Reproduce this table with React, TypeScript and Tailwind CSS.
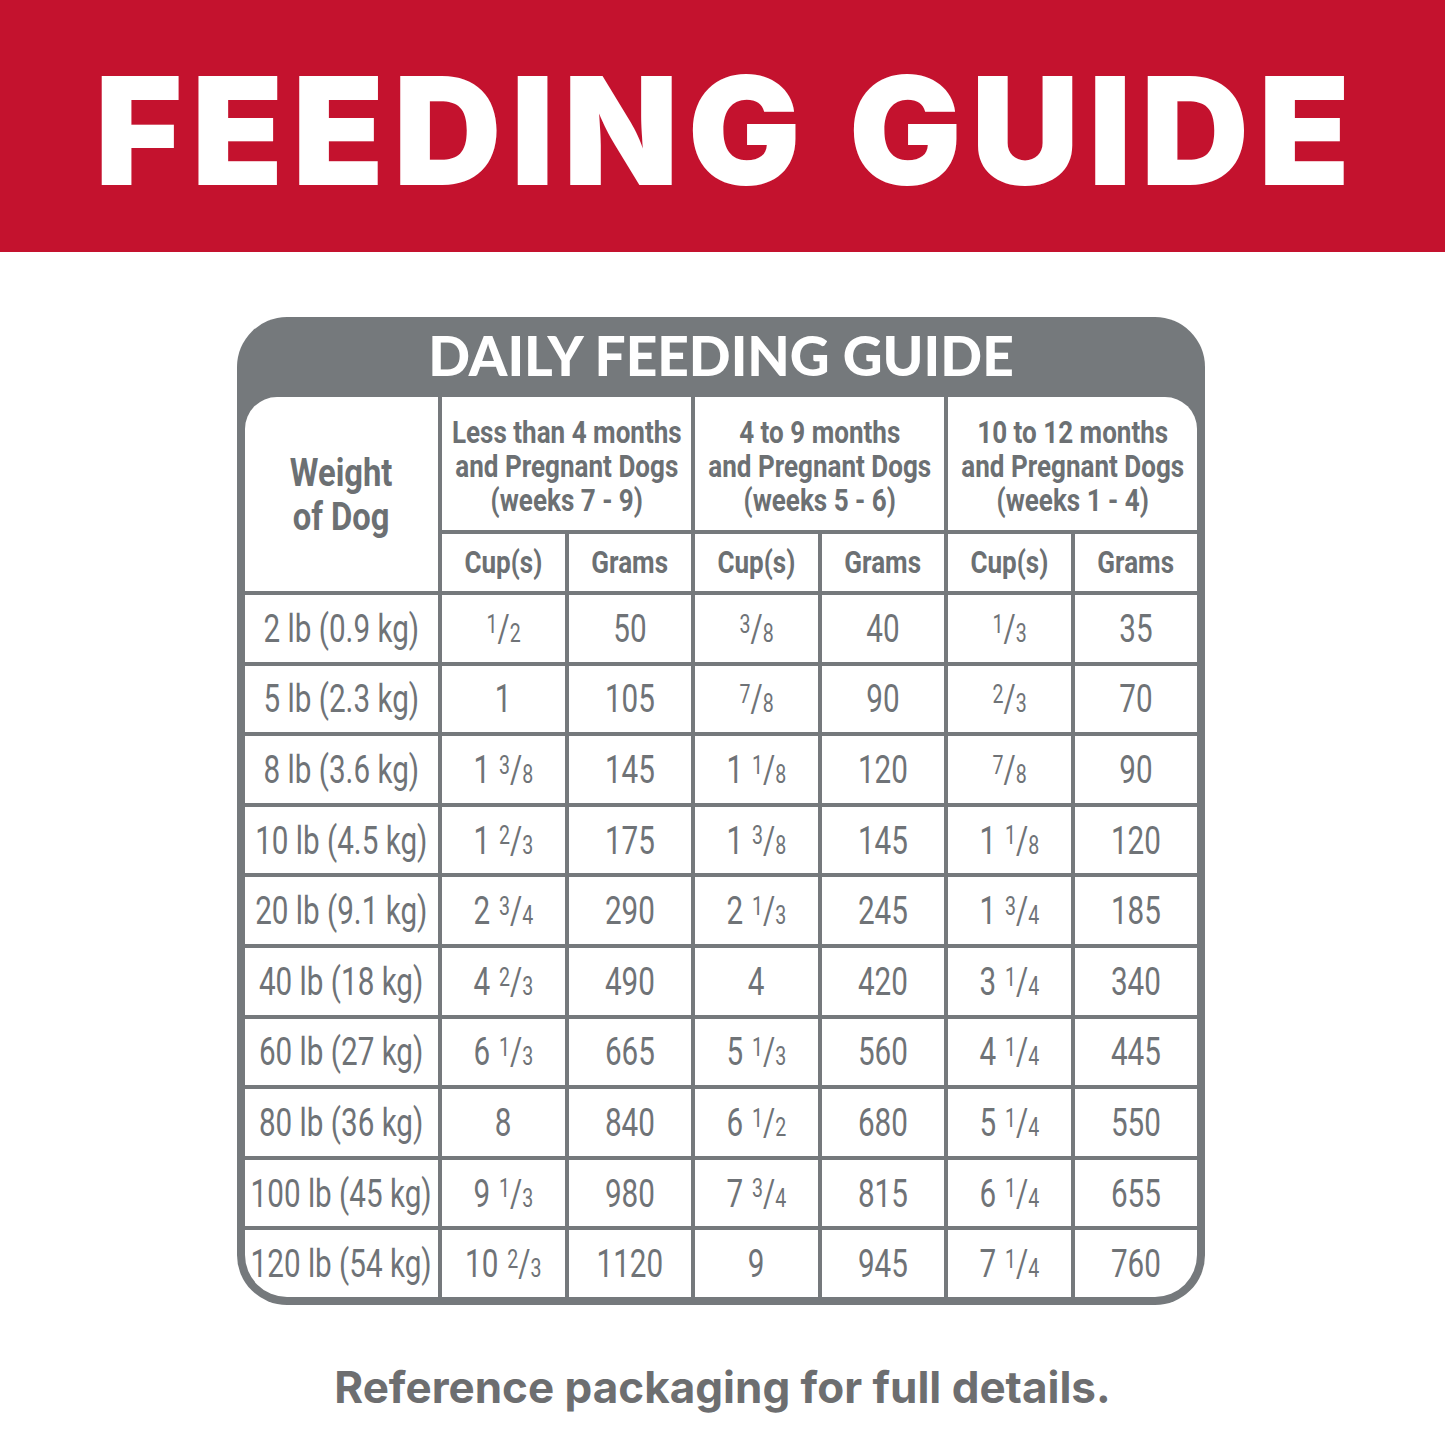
import React from "react";

const rows: string[][] = [
  ["2 lb (0.9 kg)", "1/2", "50", "3/8", "40", "1/3", "35"],
  ["5 lb (2.3 kg)", "1", "105", "7/8", "90", "2/3", "70"],
  ["8 lb (3.6 kg)", "1 3/8", "145", "1 1/8", "120", "7/8", "90"],
  ["10 lb (4.5 kg)", "1 2/3", "175", "1 3/8", "145", "1 1/8", "120"],
  ["20 lb (9.1 kg)", "2 3/4", "290", "2 1/3", "245", "1 3/4", "185"],
  ["40 lb (18 kg)", "4 2/3", "490", "4", "420", "3 1/4", "340"],
  ["60 lb (27 kg)", "6 1/3", "665", "5 1/3", "560", "4 1/4", "445"],
  ["80 lb (36 kg)", "8", "840", "6 1/2", "680", "5 1/4", "550"],
  ["100 lb (45 kg)", "9 1/3", "980", "7 3/4", "815", "6 1/4", "655"],
  ["120 lb (54 kg)", "10 2/3", "1120", "9", "945", "7 1/4", "760"],
];

const groups = [
  ["Less than 4 months", "and Pregnant Dogs", "(weeks 7 - 9)"],
  ["4 to 9 months", "and Pregnant Dogs", "(weeks 5 - 6)"],
  ["10 to 12 months", "and Pregnant Dogs", "(weeks 1 - 4)"],
];

// "1 3/8" -> 1 + small raised 3 + slash + small 8
const Amount = ({ value }: { value: string }) => {
  if (!value.includes("/")) return <>{value}</>;
  const parts = value.split(" ");
  const frac = parts[parts.length - 1];
  const whole = parts.length > 1 ? parts[0] : null;
  const [num, den] = frac.split("/");
  return (
    <>
      {whole && <span className="mr-[0.3em]">{whole}</span>}
      <span className="relative -top-[0.36em] text-[0.66em]">{num}</span>
      <span>/</span>
      <span className="text-[0.66em]">{den}</span>
    </>
  );
};

const Cell = ({ children, className = "" }: { children: React.ReactNode; className?: string }) => (
  <div className={`bg-white flex items-center justify-center text-center ${className}`}>{children}</div>
);

// the packaging uses a condensed face; squeeze Roboto to match
const Squeeze = ({ children, bold = false }: { children: React.ReactNode; bold?: boolean }) => (
  <span className={`inline-block whitespace-nowrap ${bold ? "scale-x-[0.84]" : "scale-x-[0.76]"}`}>{children}</span>
);

export default function App() {
  return (
    <div className="w-[1445px] h-[1445px] bg-white flex flex-col items-center">
      {/* Red banner */}
      <div className="w-full h-[252px] bg-[#c4122e] flex items-center justify-center pt-[10px]">
        <h1 className="text-white text-[150px] leading-none font-black tracking-[9px] pl-[9px] font-['Inter',sans-serif]">
          FEEDING GUIDE
        </h1>
      </div>

      {/* Daily feeding table */}
      <div className="mt-[65px] w-[968px] bg-[#75797c] rounded-[50px] px-[8px] pb-[8px] mr-[3px]">
        <div className="h-[80px] flex items-center justify-center">
          <h2 className="text-white text-[55px] leading-none font-black font-['Lato',sans-serif] pb-[4px]">
            DAILY FEEDING GUIDE
          </h2>
        </div>
        <div className="grid grid-cols-[193px_repeat(6,1fr)] grid-rows-[133px_57px_repeat(10,66.6px)] gap-[4px] bg-[#75797c] rounded-t-[32px] rounded-b-[42px] overflow-hidden text-[#6f7377] font-['Roboto',sans-serif]">
          <Cell className="row-span-2 font-bold text-[39px] leading-[44px] pt-[2px] text-[#6c7073]">
            <Squeeze bold>
              Weight
              <br />
              of Dog
            </Squeeze>
          </Cell>
          {groups.map((g, i) => (
            <Cell key={i} className="col-span-2 font-bold text-[31px] leading-[34px] pt-[6px] text-[#6c7073]">
              <Squeeze bold>
                {g.map((line) => (
                  <div key={line}>{line}</div>
                ))}
              </Squeeze>
            </Cell>
          ))}
          {groups.map((_, i) => (
            <React.Fragment key={i}>
              <Cell className="font-bold text-[31px] pt-[2px] text-[#6c7073]">
                <Squeeze bold>Cup(s)</Squeeze>
              </Cell>
              <Cell className="font-bold text-[31px] pt-[2px] text-[#6c7073]">
                <Squeeze bold>Grams</Squeeze>
              </Cell>
            </React.Fragment>
          ))}
          {rows.map((r) =>
            r.map((v, j) => (
              <Cell key={r[0] + j} className="text-[39px] leading-none pt-[2px]">
                <Squeeze>
                  <Amount value={v} />
                </Squeeze>
              </Cell>
            ))
          )}
        </div>
      </div>

      <p className="mt-[60px] text-[#6d6e70] text-[44px] font-bold font-['Inter',sans-serif] leading-none">
        Reference packaging for full details.
      </p>
    </div>
  );
}
